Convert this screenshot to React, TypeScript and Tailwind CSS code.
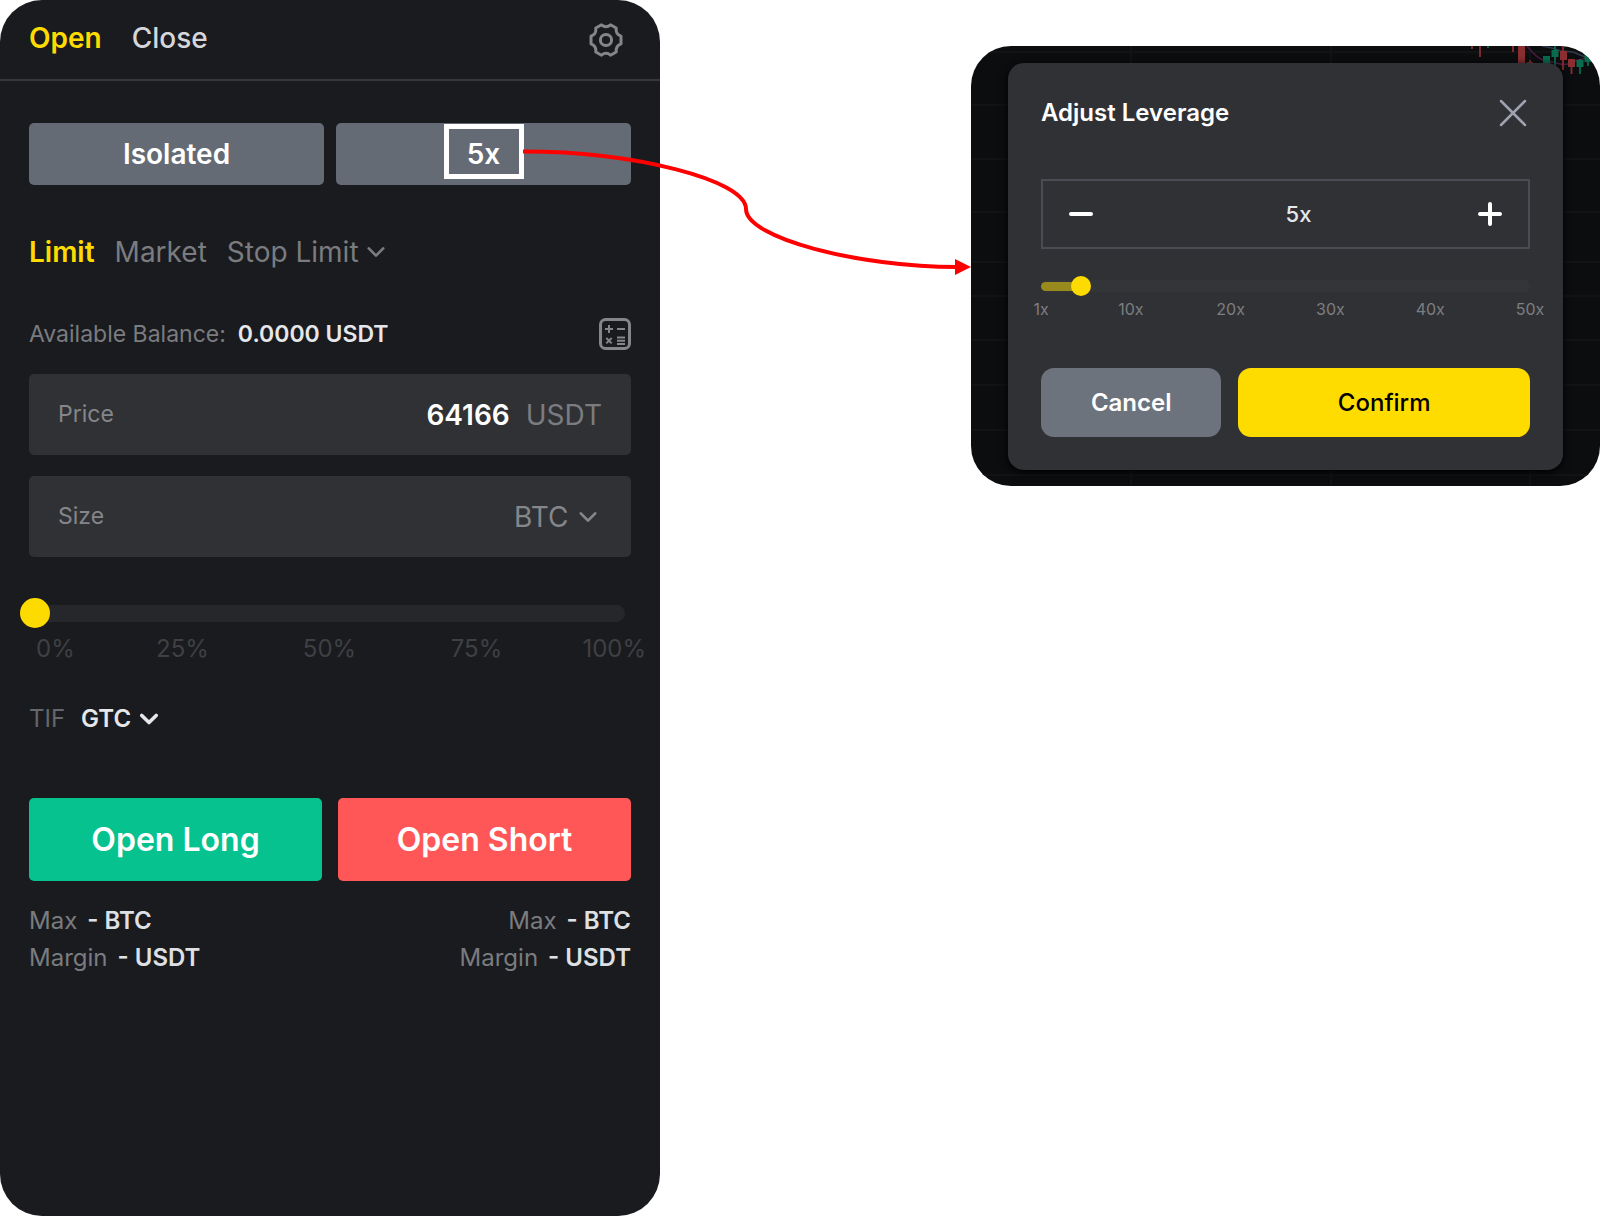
import { useState } from "react";

const FONT = "font-['Inter','Roboto',sans-serif]";

function Chevron({ className, width = 3 }: { className: string; width?: number }) {
  return (
    <svg className={className} viewBox="0 0 20 12" fill="none" stroke="currentColor" strokeWidth={width} strokeLinecap="round" strokeLinejoin="round" aria-hidden="true">
      <path d="M2 2l8 8 8-8" />
    </svg>
  );
}

function GearIcon() {
  return (
    <svg className="size-9" viewBox="0 0 36 36" fill="none" stroke="currentColor" strokeWidth="3" strokeLinejoin="round" aria-hidden="true">
      <path d="M13.500 2.800Q18 6.600 22.500 2.800L28.200 6Q27.400 12.200 33 14.200V21.800Q27.400 23.800 28.200 30L22.500 33.200Q18 29.400 13.500 33.200L7.800 30Q8.600 23.800 3 21.800V14.200Q8.600 12.200 7.800 6Z" />
      <circle cx="18" cy="18" r="5.600" />
    </svg>
  );
}

function CalculatorIcon() {
  return (
    <svg className="size-8" viewBox="0 0 32 32" fill="none" stroke="currentColor" aria-hidden="true">
      <rect x="1.500" y="1.500" width="29" height="29" rx="5" strokeWidth="3" />
      <path d="M6 11h8M10 7v8M18 11h8" strokeWidth="2" />
      <path d="M7.300 20l5.400 5.400M12.700 20l-5.400 5.400M18 19.500h8M18 22.800h8M18 26h8" strokeWidth="1.900" />
    </svg>
  );
}

function Stat({ label, value }: { label: string; value: string }) {
  return (
    <div className="flex gap-2.5">
      <dt className="text-[#7b7c7f]">{label}</dt>
      <dd className="font-semibold text-[#dfe0e3]">{value}</dd>
    </div>
  );
}

function OrderPanel() {
  const [price, setPrice] = useState("64166");
  const [size, setSize] = useState("");
  const [percent, setPercent] = useState(0);

  return (
    <section className="min-h-screen overflow-hidden rounded-[42px] bg-[#1a1b1f] pb-10" aria-label="Order form">
      <header className="flex h-[81px] items-center justify-between border-b-2 border-[#36373c] pr-9 pl-[29px]">
        <nav className="flex gap-[30px] pb-[3px] text-[28px]">
          <button className="font-semibold text-[#fedb00]">Open</button>
          <button className="font-medium text-[#d6d7da]">Close</button>
        </nav>
        <button className="text-[#85868a]" aria-label="Settings">
          <GearIcon />
        </button>
      </header>

      <div className="px-[29px] pt-[42px]">
        <div className="grid grid-cols-2 gap-3 text-[28px] font-semibold text-white">
          <button className="h-[62px] rounded-[5px] bg-[#656b75]">Isolated</button>
          <button className="relative h-[62px] rounded-[5px] bg-[#656b75]">
            5x
            <span className="absolute top-px left-1/2 h-[55px] w-20 -translate-x-1/2 border-5 border-white" />
          </button>
        </div>

        <div className="mt-[47px] flex h-10 items-center gap-5 text-[28px] text-[#7b7c7f]">
          <button className="font-semibold text-[#fedb00]">Limit</button>
          <button>Market</button>
          <label className="flex items-center gap-2">
            <select className="appearance-none bg-transparent outline-none" aria-label="Conditional order type">
              <option>Stop Limit</option>
            </select>
            <Chevron className="h-3 w-[18px]" />
          </label>
        </div>

        <div className="mt-[46px] flex h-8 items-center justify-between text-[23px]">
          <p className="flex gap-3">
            <span className="text-[#7b7c7f]">Available Balance:</span>
            <span className="font-semibold text-[#e6e7ea]">0.0000 USDT</span>
          </p>
          <button className="text-[#85868a]" aria-label="Calculator">
            <CalculatorIcon />
          </button>
        </div>

        <div className="mt-6 flex h-[81px] items-center rounded-[5px] bg-[#303135] px-[29px]">
          <label htmlFor="price" className="text-[23px] text-[#85868a]">Price</label>
          <input
            id="price"
            className="min-w-0 flex-1 bg-transparent text-right text-[28px] font-semibold text-white outline-none"
            value={price}
            onChange={(e) => setPrice(e.target.value)}
          />
          <span className="ml-4 text-[28px] text-[#7b7c7f]">USDT</span>
        </div>

        <div className="mt-[21px] flex h-[81px] items-center rounded-[5px] bg-[#303135] pr-[34px] pl-[29px]">
          <label htmlFor="size" className="text-[23px] text-[#85868a]">Size</label>
          <input
            id="size"
            className="min-w-0 flex-1 bg-transparent text-right text-[28px] font-semibold text-white outline-none"
            value={size}
            onChange={(e) => setSize(e.target.value)}
          />
          <label className="flex items-center gap-2.5 text-[28px] text-[#85868a]">
            <select className="appearance-none bg-transparent outline-none" aria-label="Size unit">
              <option>BTC</option>
            </select>
            <Chevron className="h-3 w-[18px]" />
          </label>
        </div>

        <div className="relative mt-[41px] mr-[6px] flex h-[30px] items-center">
          <div className="h-[17px] w-full rounded-full bg-[#26272b]" />
          <input
            type="range"
            aria-label="Order size percentage"
            min={0}
            max={100}
            value={percent}
            onChange={(e) => setPercent(Number(e.target.value))}
            className="absolute inset-y-0 -left-[9px] w-[calc(100%+9px)] appearance-none bg-transparent [&::-webkit-slider-thumb]:size-[30px] [&::-webkit-slider-thumb]:appearance-none [&::-webkit-slider-thumb]:rounded-full [&::-webkit-slider-thumb]:bg-[#fedb00]"
          />
        </div>
        <div className="mt-[6px] -mr-[15px] ml-[7px] grid grid-cols-[73fr_147fr_147fr_147fr_96fr] text-center text-2xl leading-[30px] text-[#3e4043]">
          <span className="text-left">0%</span>
          <span>25%</span>
          <span>50%</span>
          <span>75%</span>
          <span className="text-right">100%</span>
        </div>

        <label className="mt-10 flex h-[30px] items-center text-2xl">
          <span className="text-[#66676b]">TIF</span>
          <select className="ml-4 appearance-none bg-transparent font-semibold text-[#e6e7ea] outline-none">
            <option>GTC</option>
          </select>
          <Chevron className="ml-2 h-3 w-[18px] text-[#e6e7ea]" width={4} />
        </label>

        <div className="mt-16 grid grid-cols-2 gap-4 text-[32px] font-semibold text-white">
          <button className="h-[83px] rounded-[5px] bg-[#06c28f]">Open Long</button>
          <button className="h-[83px] rounded-[5px] bg-[#ff5757]">Open Short</button>
        </div>

        <div className="mt-[21px] flex justify-between text-2xl leading-[37px]">
          <dl>
            <Stat label="Max" value="- BTC" />
            <Stat label="Margin" value="- USDT" />
          </dl>
          <dl className="flex flex-col items-end">
            <Stat label="Max" value="- BTC" />
            <Stat label="Margin" value="- USDT" />
          </dl>
        </div>
      </div>
    </section>
  );
}

function ChartBackdrop() {
  return (
    <>
      <svg className="absolute inset-0 size-full" viewBox="0 0 629 440" preserveAspectRatio="none" stroke="#141619" strokeWidth="1.500" aria-hidden="true">
        <path d="M0 6H629M0 59H629M0 113H629M0 166H629M0 216H629M0 250H629M0 294H629M0 339H629M0 384H629M0 429H629M160 0V440M360 0V440M559 0V440" />
      </svg>
      <svg className="absolute top-0 right-0 h-[30px] w-[140px]" viewBox="1460 46 140 30" fill="none" aria-hidden="true">
        <path d="M1542 46L1552 48L1561 51L1573 52L1585 57" stroke="#2e3a4e" strokeWidth="1.500" />
        <path d="M1527 46Q1538 60 1546 61T1560 64T1578 60L1592 57" stroke="#4a1c44" strokeWidth="1.500" />
        <path d="M1472 46V49M1480 46V57M1513 46V52M1530 60V64M1563 46V70M1571.500 59V74" stroke="#8a2e32" strokeWidth="1.800" />
        <path d="M1488 46V48M1555 46V66M1580 59V74M1588 54V66" stroke="#0a6b4c" strokeWidth="1.800" />
        <path d="M1518 46h7v18h-7zM1527 62h6v2h-6zM1560 51h7v9h-7zM1568 59h7v8h-7z" fill="#8a2e32" />
        <path d="M1543 56h7v8h-7zM1551.500 50h7v7h-7zM1576.500 60h7v7h-7zM1584.500 54h8v8h-8z" fill="#0a6b4c" />
      </svg>
    </>
  );
}

const TICKS = [
  { label: "1x", grow: "grow-0" },
  { label: "10x", grow: "grow-[9]" },
  { label: "20x", grow: "grow-[10]" },
  { label: "30x", grow: "grow-[10]" },
  { label: "40x", grow: "grow-[10]" },
  { label: "50x", grow: "grow-[10]" },
];

function LeveragePanel() {
  const [leverage, setLeverage] = useState(5);
  const clamp = (n: number) => Math.min(50, Math.max(1, n));

  return (
    <section className="relative mt-[46px] self-start overflow-hidden rounded-[40px] bg-[#0c0d0f] px-[37px] pt-[17px] pb-4">
      <ChartBackdrop />
      <div role="dialog" aria-labelledby="leverage-title" className="relative rounded-2xl bg-[#303135] px-[33px] pt-8 pb-[33px] shadow-[0_2px_8px_#000]">
        <div className="flex h-9 items-center justify-between">
          <h2 id="leverage-title" className="text-2xl font-semibold text-white">Adjust Leverage</h2>
          <button className="pr-[3px] text-[#a0a2b0]" aria-label="Close">
            <svg className="size-7" viewBox="0 0 28 28" fill="none" stroke="currentColor" strokeWidth="2.500" strokeLinecap="round" aria-hidden="true">
              <path d="M2 2l24 24M26 2L2 26" />
            </svg>
          </button>
        </div>

        <div className="mt-12 flex h-[70px] items-center border-2 border-[#494d53] px-6 text-white">
          <button aria-label="Decrease leverage" onClick={() => setLeverage(clamp(leverage - 1))}>
            <svg className="size-7" viewBox="0 0 28 28" stroke="currentColor" strokeWidth="4" strokeLinecap="round" aria-hidden="true">
              <path d="M4 14h20" />
            </svg>
          </button>
          <output className="flex-1 pl-[26px] text-center text-[22px] font-medium text-[#e6e7ea]">{leverage}x</output>
          <button aria-label="Increase leverage" onClick={() => setLeverage(clamp(leverage + 1))}>
            <svg className="size-7" viewBox="0 0 28 28" stroke="currentColor" strokeWidth="4" strokeLinecap="round" aria-hidden="true">
              <path d="M4 14h20M14 4v20" />
            </svg>
          </button>
        </div>

        <div className="relative mt-[27px] flex h-5 items-center">
          <div className="flex h-3 w-full items-center rounded-full bg-[#343539]">
            <div className="h-[9px] rounded-full bg-[#988a1c]" style={{ width: `${((leverage - 1) / 49) * 100}%` }} />
          </div>
          <input
            type="range"
            aria-label="Leverage"
            min={1}
            max={50}
            value={leverage}
            onChange={(e) => setLeverage(Number(e.target.value))}
            className="absolute inset-y-0 -left-2.5 w-[calc(100%+20px)] appearance-none bg-transparent [&::-webkit-slider-thumb]:size-5 [&::-webkit-slider-thumb]:appearance-none [&::-webkit-slider-thumb]:rounded-full [&::-webkit-slider-thumb]:bg-[#fedb00]"
          />
        </div>
        <div className="mt-[3px] flex text-base leading-5 text-[#7d7e81]">
          {TICKS.map((t) => (
            <div key={t.label} className={`${t.grow} flex basis-0 justify-end`}>
              <span className="flex w-0 justify-center">{t.label}</span>
            </div>
          ))}
        </div>

        <div className="mt-[49px] grid grid-cols-[180fr_291fr] gap-[17px] text-2xl">
          <button className="h-[69px] rounded-[13px] bg-[#6d737d] font-semibold text-white">Cancel</button>
          <button className="h-[69px] rounded-[13px] bg-[#ffdc00] font-medium text-black">Confirm</button>
        </div>
      </div>
    </section>
  );
}

function Connector() {
  return (
    <svg className="pointer-events-none absolute top-0 left-0 h-[300px] w-full" viewBox="0 0 1600 300" preserveAspectRatio="none" fill="none" aria-hidden="true">
      <path d="M523 151.500C634 151.500 746 180 746 209S858 267 957 267" stroke="#ff0000" strokeWidth="4" />
      <path d="M955 259L971 267L955 275Z" fill="#ff0000" />
    </svg>
  );
}

export default function App() {
  return (
    <main className={`${FONT} relative grid min-h-screen grid-cols-[660fr_629fr] gap-x-[311px] bg-white`}>
      <OrderPanel />
      <LeveragePanel />
      <Connector />
    </main>
  );
}
